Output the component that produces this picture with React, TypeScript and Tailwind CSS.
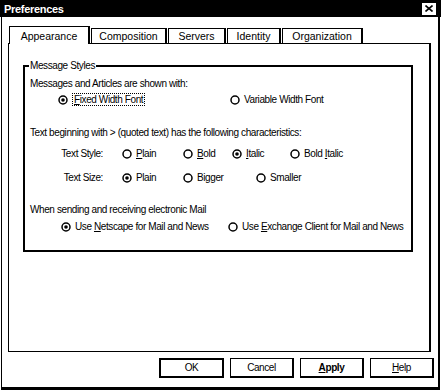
import React from "react";

function Radio({ checked, children, className = "" }: { checked?: boolean; children: React.ReactNode; className?: string }) {
  return (
    <div className={"flex items-center " + className}>
      <svg width="10" height="10" viewBox="0 0 10 10" className="shrink-0">
        <circle cx="5" cy="5" r="4" fill="white" stroke="black" strokeWidth="1.5" />
        {checked && <circle cx="5" cy="5" r="1.8" fill="black" />}
      </svg>
      <span className="ml-[4px] whitespace-nowrap">{children}</span>
    </div>
  );
}

function Tab({ label, active, w }: { label: string; active?: boolean; w: string }) {
  if (active) {
    return (
      <div className={"relative z-10 -mb-px flex h-[18px] items-center justify-center border-t border-l border-r-2 border-black bg-white " + w}>
        {label}
      </div>
    );
  }
  return (
    <div className={"flex h-[15px] items-center justify-center border-t border-l border-r-2 border-black " + w}>
      {label}
    </div>
  );
}

export default function App() {
  return (
    <div
      className="h-[390px] w-[441px] overflow-hidden bg-white text-[10px] leading-[14px] tracking-[-0.4px] text-black"
      style={{ fontFamily: '"Liberation Sans", Arial, sans-serif' }}
    >
      {/* title bar */}
      <div className="flex h-[17px] items-center justify-between bg-black pl-[4px] pr-[5px]">
        <span className="text-[11px] font-bold tracking-[-0.3px] text-white">Preferences</span>
        <div className="flex h-[12px] w-[14px] items-center justify-center bg-white">
          <svg width="8" height="7" viewBox="0 0 8 7">
            <path d="M0.5 0.5 L7.5 6.5 M7.5 0.5 L0.5 6.5" stroke="black" strokeWidth="1.6" />
          </svg>
        </div>
      </div>

      <div className="ml-px h-[373px] w-[439px] border-l border-r-2 border-b-[3px] border-black pl-[6px] pt-[9px]">
        {/* tabs */}
        <div className="flex items-end gap-px pl-px text-[10.5px] tracking-normal">
          <Tab label="Appearance" active w="w-[81px]" />
          <Tab label="Composition" w="w-[76px]" />
          <Tab label="Servers" w="w-[58px]" />
          <Tab label="Identity" w="w-[54px]" />
          <Tab label="Organization" w="w-[81px]" />
        </div>

        {/* tab page */}
        <div className="h-[309px] w-[423px] border-t border-l border-b border-r-2 border-black pl-[14px] pt-[21px]">
          <div className="relative h-[187px] w-[390px] border-2 border-black pl-[5px] pt-[10px]">
            <span className="absolute -top-[8px] left-[4px] bg-white px-[1px]">Message Styles</span>

            <div className="h-[14px]">Messages and Articles are shown with:</div>

            <div className="mt-[2px] flex h-[14px] items-center pl-[28px]">
              <Radio checked className="w-[172px]">
                <span className="border border-dotted border-black px-px">
                  <u>F</u>ixed Width Font
                </span>
              </Radio>
              <Radio>Variable Width Font</Radio>
            </div>

            <div className="mt-[19px] h-[14px]">Text beginning with &gt; (quoted text) has the following characteristics:</div>

            <div className="mt-[7px] flex h-[14px] items-center">
              <div className="w-[73px] text-right">Text Style:</div>
              <div className="w-[19px]" />
              <Radio className="w-[61px]">
                <u>P</u>lain
              </Radio>
              <Radio className="w-[49px]">
                <u>B</u>old
              </Radio>
              <Radio checked className="w-[58px]">
                <u>I</u>talic
              </Radio>
              <Radio>
                Bold <u>I</u>talic
              </Radio>
            </div>

            <div className="mt-[10px] flex h-[14px] items-center">
              <div className="w-[73px] text-right">Text Size:</div>
              <div className="w-[19px]" />
              <Radio checked className="w-[61px]">
                Plain
              </Radio>
              <Radio className="w-[73px]">Bigger</Radio>
              <Radio>Smaller</Radio>
            </div>

            <div className="mt-[18px] h-[14px]">When sending and receiving electronic Mail</div>

            <div className="mt-[3px] flex h-[14px] items-center pl-[31px]">
              <Radio checked className="w-[167px]">
                Use <u>N</u>etscape for Mail and News
              </Radio>
              <Radio>
                Use <u>E</u>xchange Client for Mail and News
              </Radio>
            </div>
          </div>
        </div>

        {/* buttons */}
        <div className="mt-[6px] flex justify-end gap-[6px] pr-[4px]">
          <button className="flex h-[20px] w-[65px] items-center justify-center border-2 border-black">OK</button>
          <button className="flex h-[20px] w-[64px] items-center justify-center border border-r-2 border-b-2 border-black">Cancel</button>
          <button className="flex h-[20px] w-[64px] items-center justify-center border border-r-2 border-b-2 border-black font-bold">
            <u>A</u>pply
          </button>
          <button className="flex h-[20px] w-[64px] items-center justify-center border border-r-2 border-b-2 border-black">
            <u>H</u>elp
          </button>
        </div>
      </div>
    </div>
  );
}
